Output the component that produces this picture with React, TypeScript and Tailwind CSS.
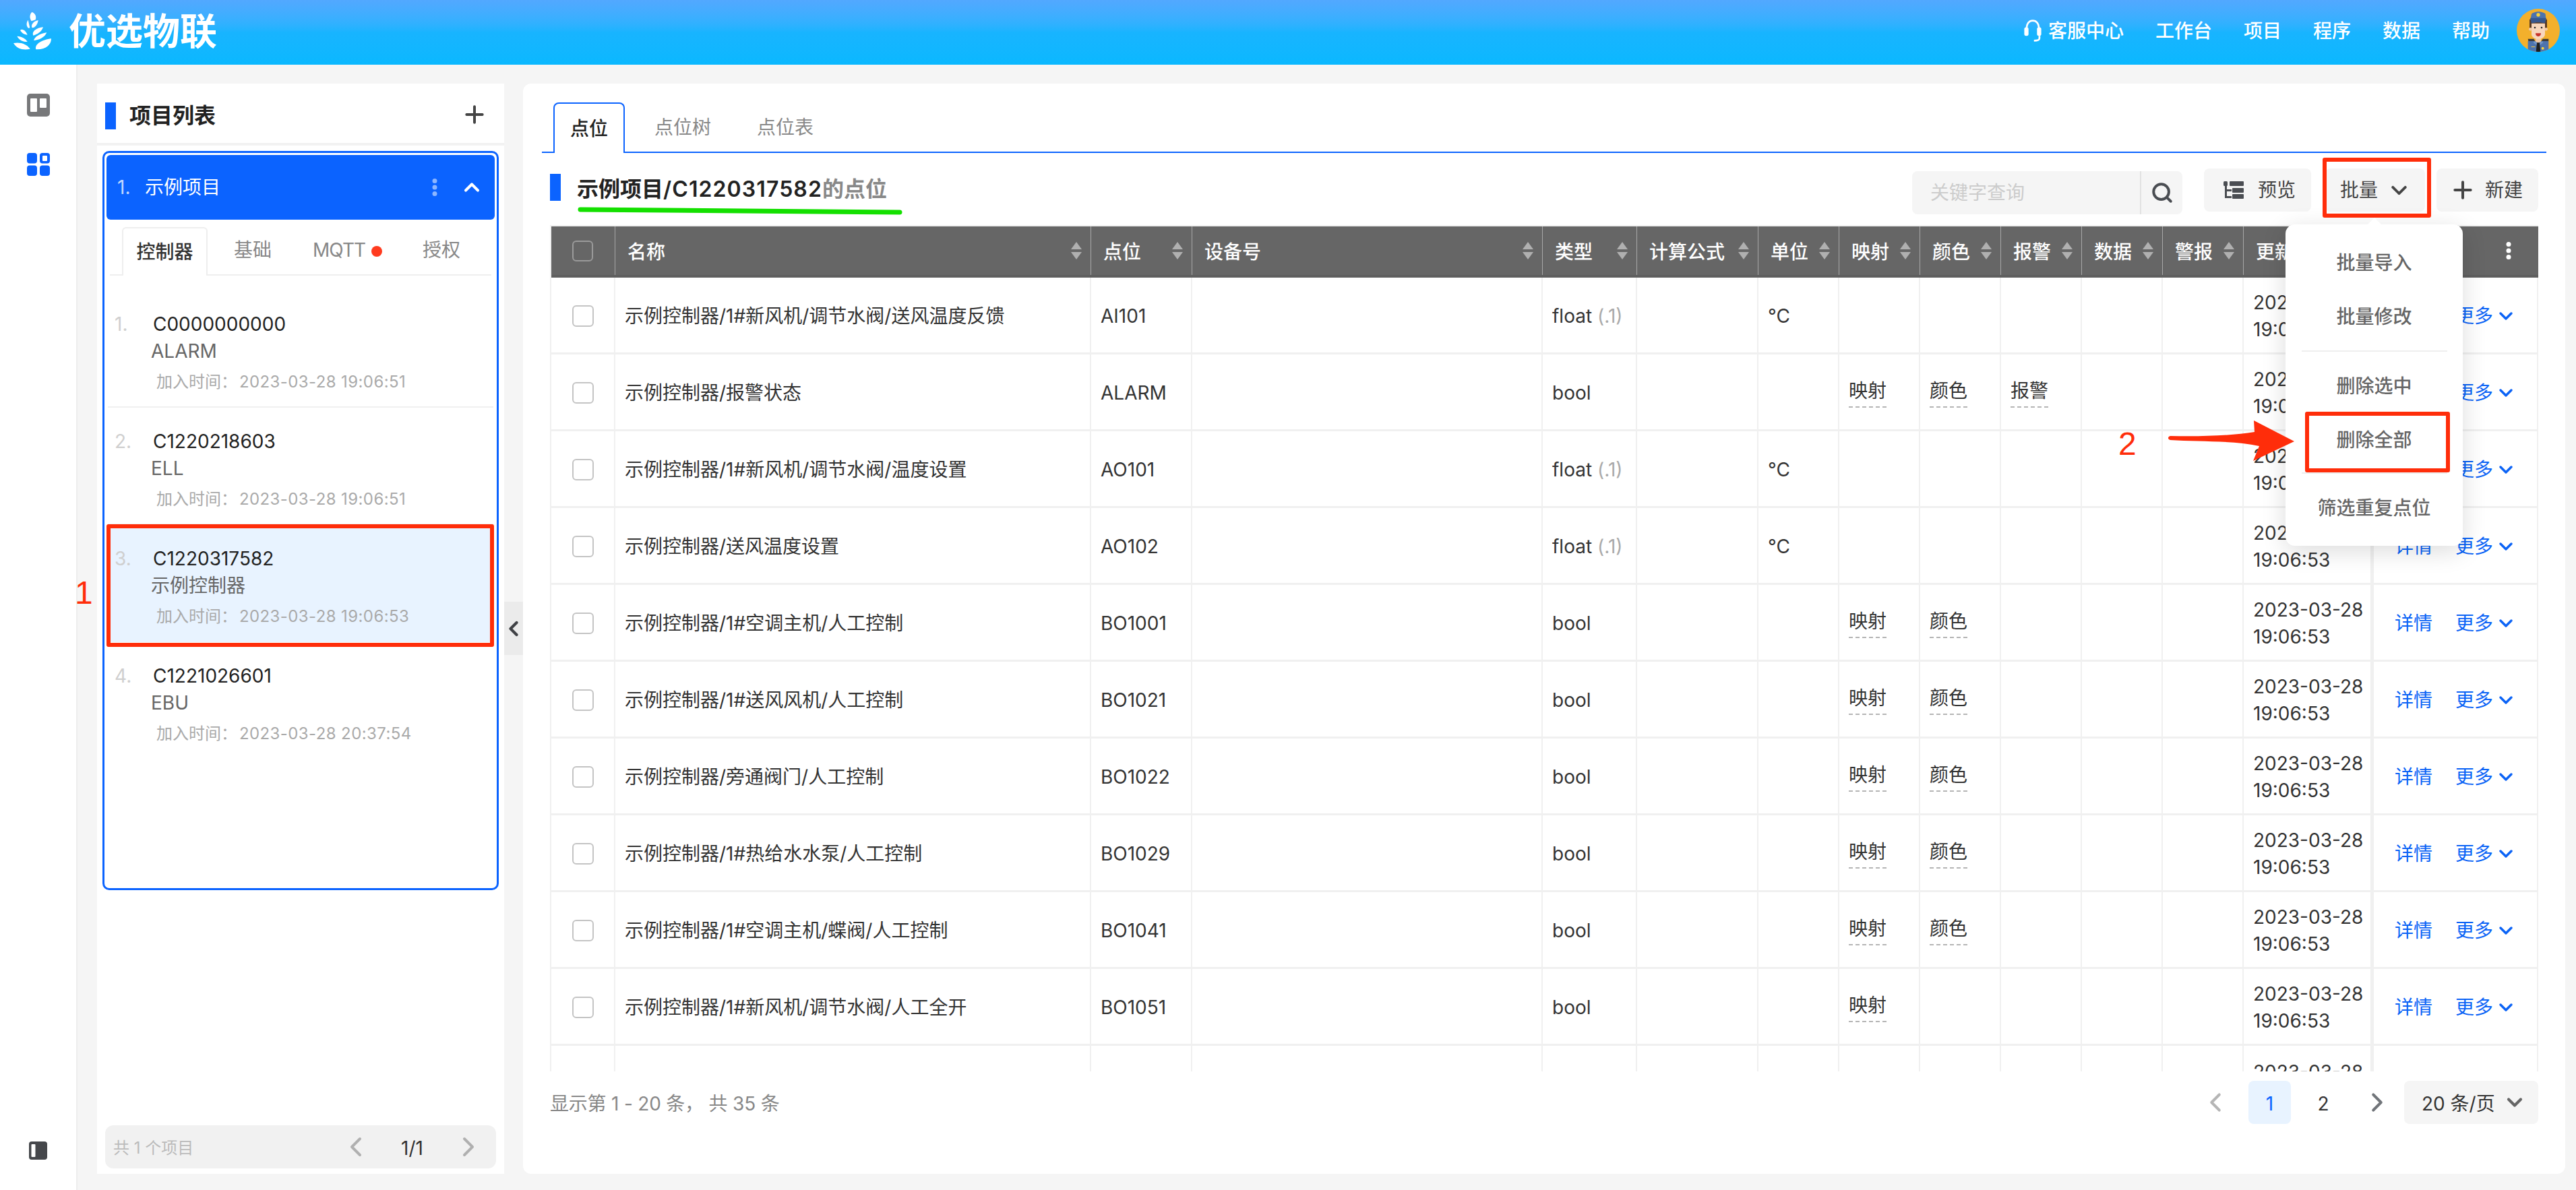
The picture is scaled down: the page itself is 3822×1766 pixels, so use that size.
import React from 'react';
import { ChevronDown, ChevronLeft, ChevronRight, ChevronUp, Plus, Search } from 'lucide-react';

const gridCols =
  'grid grid-cols-[95px_706px_150px_520px_140px_180px_120px_120px_120px_120px_120px_120px_193px_244px]';

type Row = {
  name: string;
  point: string;
  type: string;
  unit?: boolean;
  map?: boolean;
  color?: boolean;
  alarm?: boolean;
};

const rows: Row[] = [
  { name: '示例控制器/1#新风机/调节水阀/送风温度反馈', point: 'AI101', type: 'float', unit: true },
  { name: '示例控制器/报警状态', point: 'ALARM', type: 'bool', map: true, color: true, alarm: true },
  { name: '示例控制器/1#新风机/调节水阀/温度设置', point: 'AO101', type: 'float', unit: true },
  { name: '示例控制器/送风温度设置', point: 'AO102', type: 'float', unit: true },
  { name: '示例控制器/1#空调主机/人工控制', point: 'BO1001', type: 'bool', map: true, color: true },
  { name: '示例控制器/1#送风风机/人工控制', point: 'BO1021', type: 'bool', map: true, color: true },
  { name: '示例控制器/旁通阀门/人工控制', point: 'BO1022', type: 'bool', map: true, color: true },
  { name: '示例控制器/1#热给水水泵/人工控制', point: 'BO1029', type: 'bool', map: true, color: true },
  { name: '示例控制器/1#空调主机/蝶阀/人工控制', point: 'BO1041', type: 'bool', map: true, color: true },
  { name: '示例控制器/1#新风机/调节水阀/人工全开', point: 'BO1051', type: 'bool', map: true },
];

const controllers = [
  { id: 'C0000000000', name: 'ALARM', time: '2023-03-28 19:06:51' },
  { id: 'C1220218603', name: 'ELL', time: '2023-03-28 19:06:51' },
  { id: 'C1220317582', name: '示例控制器', time: '2023-03-28 19:06:53', active: true },
  { id: 'C1221026601', name: 'EBU', time: '2023-03-28 20:37:54' },
];

const columns = ['名称', '点位', '设备号', '类型', '计算公式', '单位', '映射', '颜色', '报警', '数据', '警报'];

const Logo = () => (
  <svg viewBox="0 0 240 228" className="w-[80px] h-[76px] ml-[10px] shrink-0" fill="#fff">
    <path d="M112 30C124 34 134 46 128 64L110 70C100 56 102 40 112 30Z" />
    <path d="M95 65L103 100L96 101C85 90 88 75 95 65Z" />
    <path d="M140 66C138 84 126 100 113 100C106 88 118 70 140 66Z" />
    <path d="M162 97C155 118 135 130 118 134C110 118 130 100 162 97Z" />
    <path d="M178 121C168 145 140 155 120 156C125 140 145 126 178 121Z" />
    <path d="M198 148C198 175 175 198 130 196C122 172 160 152 198 148Z" />
    <path d="M60 110C72 102 85 115 92 131C78 130 66 122 60 110Z" />
    <path d="M46 137C65 138 85 148 92 162C72 162 55 155 46 137Z" />
    <path d="M30 168C60 162 90 172 104 194C75 200 45 195 30 168Z" />
  </svg>
);

const Avatar = () => (
  <svg viewBox="0 0 252 240" className="w-[84px] h-[80px] shrink-0 -ml-[17px]">
    <defs>
      <clipPath id="avatar-clip">
        <circle cx="126" cy="117" r="96" />
      </clipPath>
    </defs>
    <circle cx="126" cy="117" r="96" fill="#f3b02c" />
    <g clipPath="url(#avatar-clip)">
      <path d="M80 165H172V220H80Z" fill="#4d73ad" />
      <path d="M80 155H106L112 165H82Z" fill="#3a3a3a" />
      <path d="M146 155H172V165H140Z" fill="#3a3a3a" />
      <path d="M114 148H138V168L126 174L114 168Z" fill="#f0c9a8" />
      <path d="M108 165L126 178L144 165L148 172L126 190L104 172Z" fill="#6f94c8" />
      <path d="M120 172H132L136 214H116Z" fill="#1f1f1f" />
      <path d="M95 189H112V192H95Z" fill="#f3c63a" />
      <circle cx="146" cy="197" r="6" fill="#f7d33c" />
      <path d="M87 68H165V110H87Z" fill="#5b3a22" />
      <path d="M96 86H156V134C156 148 140 156 126 156C112 156 96 148 96 134Z" fill="#f7d6bd" />
      <circle cx="91" cy="112" r="7" fill="#f0c9a8" />
      <circle cx="161" cy="112" r="7" fill="#f0c9a8" />
      <circle cx="111" cy="105" r="4" fill="#222" />
      <circle cx="141" cy="105" r="4" fill="#222" />
      <path d="M114 130H138C138 142 130 144 126 144C122 144 114 142 114 130Z" fill="#c8322a" />
      <path d="M96 44C110 30 144 30 158 44L160 66H92Z" fill="#4d73ad" />
      <path d="M90 62H162L156 86C140 80 112 80 96 86Z" fill="#37578f" />
      <circle cx="126" cy="48" r="8" fill="#f7d33c" />
    </g>
  </svg>
);

const Headset = () => (
  <svg viewBox="0 0 30 40" className="w-[30px] h-[36px]" fill="none">
    <path d="M5 20V14C5 8 9 3 15 3C21 3 25 8 25 14V20" stroke="#fff" strokeWidth="3" />
    <rect x="1" y="14" width="7" height="14" rx="3" fill="#fff" />
    <rect x="22" y="14" width="7" height="14" rx="3" fill="#fff" />
    <path d="M26 28V32C26 35 22 36 17 36" stroke="#fff" strokeWidth="3" />
  </svg>
);

const TreeIcon = () => (
  <svg viewBox="0 0 30 26" className="w-[30px] h-[26px]" fill="#4a4d52">
    <rect x="0" y="0" width="6" height="7" rx="1.5" />
    <rect x="2" y="5" width="3" height="20" />
    <rect x="2" y="12" width="10" height="3" />
    <rect x="2" y="22" width="10" height="3" />
    <rect x="9" y="0" width="21" height="7" rx="1" />
    <rect x="13" y="10" width="17" height="7" rx="1" />
    <rect x="13" y="19" width="17" height="7" rx="1" />
  </svg>
);

const SortIcon = () => (
  <svg viewBox="0 0 16 26" className="w-[16px] h-[26px] shrink-0 -mt-[3px]" fill="#b0b0b0">
    <path d="M8 0L16 11H0Z" />
    <path d="M8 26L16 15H0Z" />
  </svg>
);

const Dots = ({ color }: { color: string }) => (
  <svg viewBox="0 0 8 26" className="w-[8px] h-[26px] shrink-0" fill={color}>
    <circle cx="4" cy="3.5" r="3.5" />
    <circle cx="4" cy="13" r="3.5" />
    <circle cx="4" cy="22.5" r="3.5" />
  </svg>
);

const Dashed = ({ children }: { children: React.ReactNode }) => (
  <span className="border-b-2 border-dashed border-[#b5b5b5] pb-[4px] leading-[38px]">{children}</span>
);

const Cell = ({ children, className = '' }: { children?: React.ReactNode; className?: string }) => (
  <div className={`flex items-center border-r-2 border-[#f0f0f0] pl-[14px] pt-[3px] ${className}`}>{children}</div>
);

const TableRow = ({ row }: { row: Row }) => (
  <div className={`${gridCols} h-[114px] border-b-[3px] border-[#f0f0f0] text-[28px] text-[#333]`}>
    <Cell className="pl-[31px] pt-0">
      <span className="w-[32px] h-[32px] rounded-[6px] border-2 border-[#c4c4c4] bg-white" />
    </Cell>
    <Cell>{row.name}</Cell>
    <Cell>{row.point}</Cell>
    <Cell />
    <Cell>
      {row.type}
      {row.type === 'float' && <span className="ml-[8px] text-[#aaa]">(.1)</span>}
    </Cell>
    <Cell />
    <Cell>{row.unit && '°C'}</Cell>
    <Cell>{row.map && <Dashed>映射</Dashed>}</Cell>
    <Cell>{row.color && <Dashed>颜色</Dashed>}</Cell>
    <Cell>{row.alarm && <Dashed>报警</Dashed>}</Cell>
    <Cell />
    <Cell />
    <Cell className="border-r-[5px] leading-[40px]">
      <div>
        2023-03-28
        <br />
        19:06:53
      </div>
    </Cell>
    <Cell className="pl-[31px] text-[#0b63f6] gap-[34px]">
      <span>详情</span>
      <span className="flex items-center">
        更多
        <ChevronDown className="w-[32px] h-[32px] shrink-0 ml-[3px]" strokeWidth={2.6} />
      </span>
    </Cell>
  </div>
);

const LastRow = () => (
  <div className={`${gridCols} h-[114px] text-[28px] text-[#333]`}>
    <Cell />
    <Cell />
    <Cell />
    <Cell />
    <Cell />
    <Cell />
    <Cell />
    <Cell />
    <Cell />
    <Cell />
    <Cell />
    <Cell />
    <Cell className="border-r-[5px] leading-[40px]">
      <div>
        2023-03-28
        <br />
        19:06:53
      </div>
    </Cell>
    <Cell />
  </div>
);

const TableHeader = () => (
  <div className={`${gridCols} h-[76px] bg-[#666666] border-b-[4px] border-[#5f5f5f] text-[28px] font-medium text-white`}>
    <div className="flex items-center border-r border-[#a8a8a8] pl-[31px]">
      <span className="w-[31px] h-[31px] rounded-[6px] border-2 border-[#9a9a9a]" />
    </div>
    {columns.map((c) => (
      <div key={c} className="flex items-center justify-between border-r border-[#a8a8a8] pl-[18px] pr-[13px] pt-[3px]">
        <span>{c}</span>
        <SortIcon />
      </div>
    ))}
    <div className="flex items-center border-r border-[#a8a8a8] pl-[18px] pt-[3px]">更新时间</div>
    <div className="flex items-center justify-end pr-[40px]">
      <Dots color="#ffffff" />
    </div>
  </div>
);

const ControllerItem = ({ item, index, last }: { item: (typeof controllers)[number]; index: number; last: boolean }) => (
  <div
    className={`h-[174px] mx-[2px] pt-[30px] ${item.active ? 'bg-[#e8f3ff]' : ''} ${
      last || item.active ? '' : 'border-b-2 border-[#f0f0f0]'
    }`}
  >
    <div className="flex items-center h-[40px] text-[28px] text-[#222]">
      <span className="w-[67px] pl-[10px] text-[#cfcfcf]">{index + 1}.</span>
      <span>{item.id}</span>
    </div>
    <div className="h-[40px] flex items-center pl-[64px] text-[28px] text-[#666]">{item.name}</div>
    <div className="mt-[6px] h-[40px] flex items-center pl-[72px] text-[24px] text-[#aaa]">
      加入时间： <span className="ml-[3px] tracking-[0.4px]">{item.time}</span>
    </div>
  </div>
);

const ProjectPanel = () => (
  <aside className="w-[604px] shrink-0 bg-white flex flex-col">
    <div className="h-[92px] shrink-0 flex items-center pt-[8px] pl-[12px] pr-[24px] border-b-[4px] border-[#f2f2f2]">
      <span className="w-[16px] h-[40px] bg-[#0b63ff]" />
      <span className="ml-[20px] flex-1 text-[32px] font-bold text-[#222]">项目列表</span>
      <Plus className="w-[40px] h-[40px] text-[#444] -mt-[4px]" strokeWidth={2.4} />
    </div>
    <div className="mx-[8px] mt-[8px] h-[1097px] rounded-[10px] border-[3px] border-[#0b63ff] p-[3px]">
      <div className="h-[96px] rounded-[6px] bg-[#0b63ff] flex items-center pl-[16px] pr-[16px] text-[28px] text-white">
        <span className="text-[#c4d9ff] w-[41px]">1.</span>
        <span className="flex-1">示例项目</span>
        <Dots color="#8db6ff" />
        <ChevronUp className="ml-[33px] w-[36px] h-[36px] shrink-0" strokeWidth={2.7} />
      </div>
      <div className="mt-[11px] mx-[5px] h-[72px] border-b-2 border-[#eeeeee] flex items-end pl-[18px] text-[28px] text-[#888]">
        <div className="w-[127px] h-[72px] -mb-[2px] bg-white rounded-t-[6px] border-2 border-b-0 border-[#eeeeee] flex items-center justify-center font-medium text-[#333]">
          控制器
        </div>
        <div className="h-[72px] flex items-center ml-[39px]">基础</div>
        <div className="h-[72px] flex items-center ml-[61px] tracking-[-1px]">
          MQTT
          <span className="ml-[9px] mt-[4px] w-[16px] h-[16px] rounded-full bg-[#ff3b1f]" />
        </div>
        <div className="h-[72px] flex items-center ml-[60px]">授权</div>
      </div>
      <div className="mt-[22px]">
        {controllers.map((c, i) => (
          <ControllerItem key={c.id} item={c} index={i} last={i === controllers.length - 1} />
        ))}
      </div>
    </div>
    <div className="flex-1" />
    <div className="mx-[12px] mb-[8px] h-[64px] rounded-[12px] bg-[#f1f1f1] flex items-center pl-[12px] text-[24px] text-[#bbb]">
      <span className="flex-1 pt-[3px]">共 1 个项目</span>
      <ChevronLeft className="w-[48px] h-[48px] shrink-0 text-[#b0b0b0]" strokeWidth={2} />
      <span className="w-[119px] pt-[3px] text-center text-[28px] text-[#333]">1/1</span>
      <ChevronRight className="w-[48px] h-[48px] shrink-0 text-[#b0b0b0] mr-[17px]" strokeWidth={2} />
    </div>
  </aside>
);

const Toolbar = () => (
  <div className="mx-[40px] mt-[23px] h-[64px] flex items-start text-[28px] text-[#444] shrink-0">
    <span className="w-[16px] h-[40px] mt-[8px] bg-[#0b63ff]" />
    <span className="ml-[24px] mt-[7px] text-[32px] font-semibold text-[#222]">
      示例项目<span className="tracking-[1.1px]">/C1220317582</span>
      <span className="text-[#888]">的点位</span>
    </span>
    <div className="flex-1" />
    <div className="mt-[4px] h-[64px] w-[401px] rounded-[8px] bg-[#f5f5f5] flex items-center">
      <span className="flex-1 pl-[27px] text-[#cccccc]">关键字查询</span>
      <span className="w-[63px] h-[64px] border-l-2 border-[#e2e2e2] flex items-center justify-center">
        <Search className="w-[34px] h-[34px] text-[#4a4d52]" strokeWidth={2.8} />
      </span>
    </div>
    <div className="ml-[32px] w-[159px] h-[64px] rounded-[8px] bg-[#f5f5f5] flex items-center pl-[29px] gap-[21px]">
      <TreeIcon />
      预览
    </div>
    <div className="ml-[21px] w-[148px] h-[64px] rounded-[8px] bg-[#f5f5f5] flex items-center pl-[22px] gap-[13px]">
      批量
      <ChevronDown className="w-[37px] h-[37px] shrink-0" strokeWidth={2.5} />
    </div>
    <div className="ml-[17px] w-[151px] h-[64px] rounded-[8px] bg-[#f5f5f5] flex items-center pl-[19px] gap-[13px]">
      <Plus className="w-[40px] h-[40px] shrink-0" strokeWidth={2.4} />
      新建
    </div>
  </div>
);

const DataPanel = () => (
  <main className="flex-1 min-w-0 bg-white rounded-[12px] flex flex-col">
    <div className="mx-[28px] mt-[28px] h-[75px] shrink-0 border-b-2 border-[#0b63ff] flex pl-[17px] text-[28px] text-[#888]">
      <div className="w-[106px] h-[75px] rounded-t-[8px] border-2 border-b-0 border-[#0b63ff] bg-white flex items-center justify-center font-medium text-[#222]">
        点位
      </div>
      <div className="ml-[44px] flex items-center">点位树</div>
      <div className="ml-[68px] flex items-center">点位表</div>
    </div>
    <Toolbar />
    <div className="mx-[40px] mt-[20px] flex-1 min-h-0 overflow-hidden border-t-2 border-l-2 border-[#f0f0f0]">
      <TableHeader />
      {rows.map((r) => (
        <TableRow key={r.point} row={r} />
      ))}
      <LastRow />
    </div>
    <div className="h-[152px] shrink-0 mx-[40px] pt-[14px] flex items-start text-[28px]">
      <span className="h-[64px] pt-[3px] flex items-center text-[#888] tracking-[-0.2px]">显示第 1 - 20 条， 共 35 条</span>
      <div className="flex-1" />
      <div className="h-[64px] flex items-center text-[#333]">
        <ChevronLeft className="w-[46px] h-[46px] shrink-0 text-[#b5b5b5]" strokeWidth={2.1} />
        <span className="ml-[26px] w-[63px] h-[64px] pt-[3px] rounded-[8px] bg-[#e8f3ff] text-[#0b63ff] flex items-center justify-center">
          1
        </span>
        <span className="w-[96px] pt-[3px] text-center">2</span>
        <ChevronRight className="w-[46px] h-[46px] shrink-0 text-[#71757a] ml-[9px]" strokeWidth={2.1} />
        <div className="ml-[17px] w-[199px] h-[64px] rounded-[8px] bg-[#f5f5f5] flex items-center pl-[26px] pr-[17px]">
          <span className="flex-1 pt-[3px]">20 条/页</span>
          <ChevronDown className="w-[36px] h-[36px] shrink-0 text-[#666]" strokeWidth={2.8} />
        </div>
      </div>
    </div>
  </main>
);

const BatchMenu = () => (
  <div className="absolute left-[3391px] top-[333px] w-[263px] h-[477px] pt-[17px] rounded-[14px] bg-white shadow-[0_8px_36px_rgba(0,0,0,0.14)] flex flex-col items-center text-[28px] font-medium text-[#666]">
    <span className="absolute -top-[5px] left-[120px] w-[24px] h-[24px] rotate-45 bg-white" />
    <div className="h-[80px] leading-[80px]">批量导入</div>
    <div className="h-[80px] leading-[80px]">批量修改</div>
    <div className="w-[216px] mt-[10px] border-b-2 border-[#eeeeee]" />
    <div className="h-[80px] mt-[11px] leading-[80px]">删除选中</div>
    <div className="h-[80px] leading-[80px]">删除全部</div>
    <div className="w-[216px] mt-[8px] border-b-2 border-[#eeeeee]" />
    <div className="h-[80px] mt-[11px] leading-[80px]">筛选重复点位</div>
  </div>
);

export default function App() {
  return (
    <div className="relative w-screen h-screen overflow-hidden flex flex-col bg-[#f5f5f5] [font-family:Inter,'Noto_Sans_CJK_SC',sans-serif]">
      <header className="h-[96px] shrink-0 pb-[4px] bg-gradient-to-b from-[#52a8ff] via-[#18b4ff] to-[#0ab8ff] flex items-center text-white">
        <Logo />
        <span className="ml-[12px] text-[55px] font-bold">优选物联</span>
        <div className="flex-1" />
        <nav className="flex items-center text-[28px] font-medium gap-[47px] mr-[14px]">
          <span className="flex items-center gap-[8px]">
            <Headset />
            客服中心
          </span>
          <span>工作台</span>
          <span>项目</span>
          <span>程序</span>
          <span>数据</span>
          <span>帮助</span>
          <Avatar />
        </nav>
      </header>
      <div className="flex-1 min-h-0 flex">
        <div className="w-[115px] shrink-0 bg-white border-r-2 border-[#ededed] flex flex-col items-center pt-[43px] pb-[45px]">
          <svg viewBox="0 0 34 34" className="w-[34px] h-[34px]">
            <rect width="34" height="34" rx="5" fill="#77787a" />
            <rect x="5" y="7" width="10" height="20" rx="1" fill="#fff" />
            <rect x="19" y="7" width="10" height="14" rx="1" fill="#fff" />
          </svg>
          <svg viewBox="0 0 34 34" className="w-[34px] h-[34px] mt-[54px]" fill="#0b63ff">
            <rect x="0" y="0" width="15" height="15.5" rx="4" />
            <rect x="19" y="0" width="15" height="15.5" rx="4" />
            <rect x="23" y="4" width="7" height="8" rx="1" fill="#fff" />
            <rect x="0" y="18.5" width="15" height="15.5" rx="4" />
            <rect x="19" y="18.5" width="15" height="15.5" rx="4" />
          </svg>
          <div className="flex-1" />
          <svg viewBox="0 0 27 27" className="w-[27px] h-[27px]">
            <rect width="27" height="27" rx="4" fill="#45474b" />
            <rect x="3.5" y="4" width="6" height="19" rx="1" fill="#fff" />
          </svg>
        </div>
        <div className="flex-1 min-w-0 flex gap-[28px] pt-[28px] pl-[29px] pr-[16px] pb-[24px]">
          <ProjectPanel />
          <DataPanel />
        </div>
      </div>

      <div className="absolute left-[748px] top-[893px] w-[28px] h-[79px] bg-[#ebebeb] flex items-center justify-center">
        <ChevronLeft className="w-[36px] h-[36px] shrink-0 text-[#3f4145]" strokeWidth={2.8} />
      </div>

      <BatchMenu />

      {/* annotations drawn over the screen */}
      <div className="absolute left-[158px] top-[778px] w-[575px] h-[182px] rounded-[3px] border-[6px] border-[#ff2d0a]" />
      <div className="absolute left-[3446px] top-[234px] w-[161px] h-[89px] rounded-[3px] border-[6px] border-[#ff2d0a]" />
      <div className="absolute left-[3420px] top-[611px] w-[215px] h-[90px] rounded-[3px] border-[6px] border-[#ff2d0a]" />
      <span className="absolute left-[111px] top-[852px] text-[48px] leading-[56px] text-[#ff2d0a] [font-family:'Liberation_Sans',sans-serif]">
        1
      </span>
      <span className="absolute left-[3143px] top-[631px] text-[48px] leading-[56px] text-[#ff2d0a] [font-family:'Liberation_Sans',sans-serif]">
        2
      </span>
      <svg className="absolute left-[3210px] top-[615px] w-[200px] h-[80px]" viewBox="0 0 200 80">
        <path d="M10 32C50 33 100 32 135 26L134 9L194 40L133 69L142 47C100 38 50 41 10 38C6 37 6 33 10 32Z" fill="#ff2d0a" />
      </svg>
      <svg className="absolute left-[850px] top-[305px] w-[500px] h-[20px]" viewBox="0 0 500 20">
        <path d="M11 6L485 10" stroke="#14e000" strokeWidth="7" strokeLinecap="round" />
      </svg>
    </div>
  );
}
